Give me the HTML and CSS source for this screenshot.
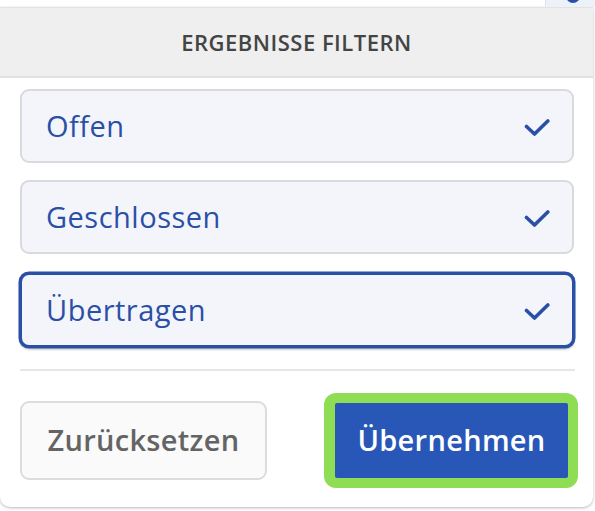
FILE: index.html
```html
<!DOCTYPE html>
<html lang="de">
<head>
<meta charset="utf-8">
<title>Ergebnisse filtern</title>
<link rel="stylesheet" href="styles.css">
</head>
<body>
<div class="topstrip">
  <div class="peek"><span class="peek-dot"></span></div>
</div>
<div class="panel">
  <div class="panel-header">ERGEBNISSE FILTERN</div>
  <ul class="options">
    <li class="option">
      <span class="option-label">Offen</span>
      <svg class="check" viewBox="0 0 26 17" width="26" height="17"><path d="M2.5 7.5 L10.5 15 L23.8 2" fill="none" stroke="currentColor" stroke-width="3.6" stroke-linecap="round" stroke-linejoin="round"/></svg>
    </li>
    <li class="option">
      <span class="option-label">Geschlossen</span>
      <svg class="check" viewBox="0 0 26 17" width="26" height="17"><path d="M2.5 7.5 L10.5 15 L23.8 2" fill="none" stroke="currentColor" stroke-width="3.6" stroke-linecap="round" stroke-linejoin="round"/></svg>
    </li>
    <li class="option option-active">
      <span class="option-label">Übertragen</span>
      <svg class="check" viewBox="0 0 26 17" width="26" height="17"><path d="M2.5 7.5 L10.5 15 L23.8 2" fill="none" stroke="currentColor" stroke-width="3.6" stroke-linecap="round" stroke-linejoin="round"/></svg>
    </li>
  </ul>
  <div class="divider"></div>
  <div class="actions">
    <button class="btn btn-secondary" type="button">Zurücksetzen</button>
    <div class="focus-ring"><button class="btn btn-primary" type="button">Übernehmen</button></div>
  </div>
</div>
</body>
</html>
```

FILE: styles.css
```css
* { box-sizing: border-box; }

html, body {
  margin: 0;
  padding: 0;
  background: #ffffff;
}

body {
  width: 595px;
  height: 511px;
  overflow: hidden;
  font-family: "Open Sans", "Lato", sans-serif;
}

.topstrip {
  height: 7px;
  display: flex;
  justify-content: flex-end;
  background: #ffffff;
}

.peek {
  width: 50px;
  height: 7px;
  background: #edf1f9;
  border-left: 1px solid #dde2ec;
  overflow: hidden;
  display: flex;
  justify-content: flex-end;
  padding-right: 15px;
}

.peek-dot {
  display: block;
  width: 14px;
  height: 14px;
  margin-top: -11px;
  border-radius: 50%;
  background: #2a4fa6;
}

.panel {
  width: 593px;
  height: 500px;
  background: #ffffff;
  border-radius: 0 0 10px 10px;
  box-shadow: 0 1px 3px rgba(0, 0, 0, 0.28);
  display: flex;
  flex-direction: column;
}

.panel-header {
  height: 71px;
  background: #efefef;
  border-top: 1px solid #e2e2e2;
  border-bottom: 2px solid #e1e1e1;
  display: flex;
  align-items: center;
  justify-content: center;
  color: #444444;
  font-size: 22px;
  font-weight: 600;
  letter-spacing: 0.5px;
  padding-top: 0;
}

.options {
  list-style: none;
  margin: 11px 0 0 0;
  padding: 0 19px 0 20px;
  display: flex;
  flex-direction: column;
  gap: 17px;
}

.option {
  height: 74px;
  border: 2px solid #d9d9de;
  border-radius: 9px;
  background: #f4f5fa;
  display: flex;
  align-items: center;
  justify-content: space-between;
  padding: 0 22px 0 24px;
  color: #2a4fa6;
}

.option-label {
  font-size: 29px;
  font-weight: 400;
  letter-spacing: 0.5px;
  padding-bottom: 1px;
}

.check {
  display: block;
  margin-top: 3px;
  color: #2a4fa6;
}

.option-active {
  margin-top: 2px;
  border-color: #2a4fa6;
  box-shadow: 0 0 0 1.5px #2a4fa6, 0 2px 2px 1px rgba(0, 0, 0, 0.18);
}

.divider {
  height: 2px;
  background: #e6e6e6;
  margin: 22px 18px 0 20px;
}

.actions {
  margin-top: 22px;
  padding: 0 15px 0 20px;
  display: flex;
  align-items: center;
  justify-content: space-between;
}

.btn {
  font-family: "Open Sans", "Lato", sans-serif;
  font-size: 29px;
  font-weight: 600;
  letter-spacing: 0.3px;
  cursor: pointer;
}

.btn-secondary {
  width: 247px;
  height: 79px;
  border: 2px solid #dcdcdc;
  border-radius: 9px;
  background: #fafafa;
  color: #646464;
  padding: 0 0 2px 0;
}

.focus-ring {
  padding: 10px 10px 10px 11px;
  background: #8fdc55;
  border-radius: 12px;
}

.btn-primary {
  display: block;
  width: 233px;
  height: 75px;
  border: none;
  border-radius: 2px;
  background: #2957b8;
  color: #ffffff;
  padding: 0 0 2px 0;
}
```
